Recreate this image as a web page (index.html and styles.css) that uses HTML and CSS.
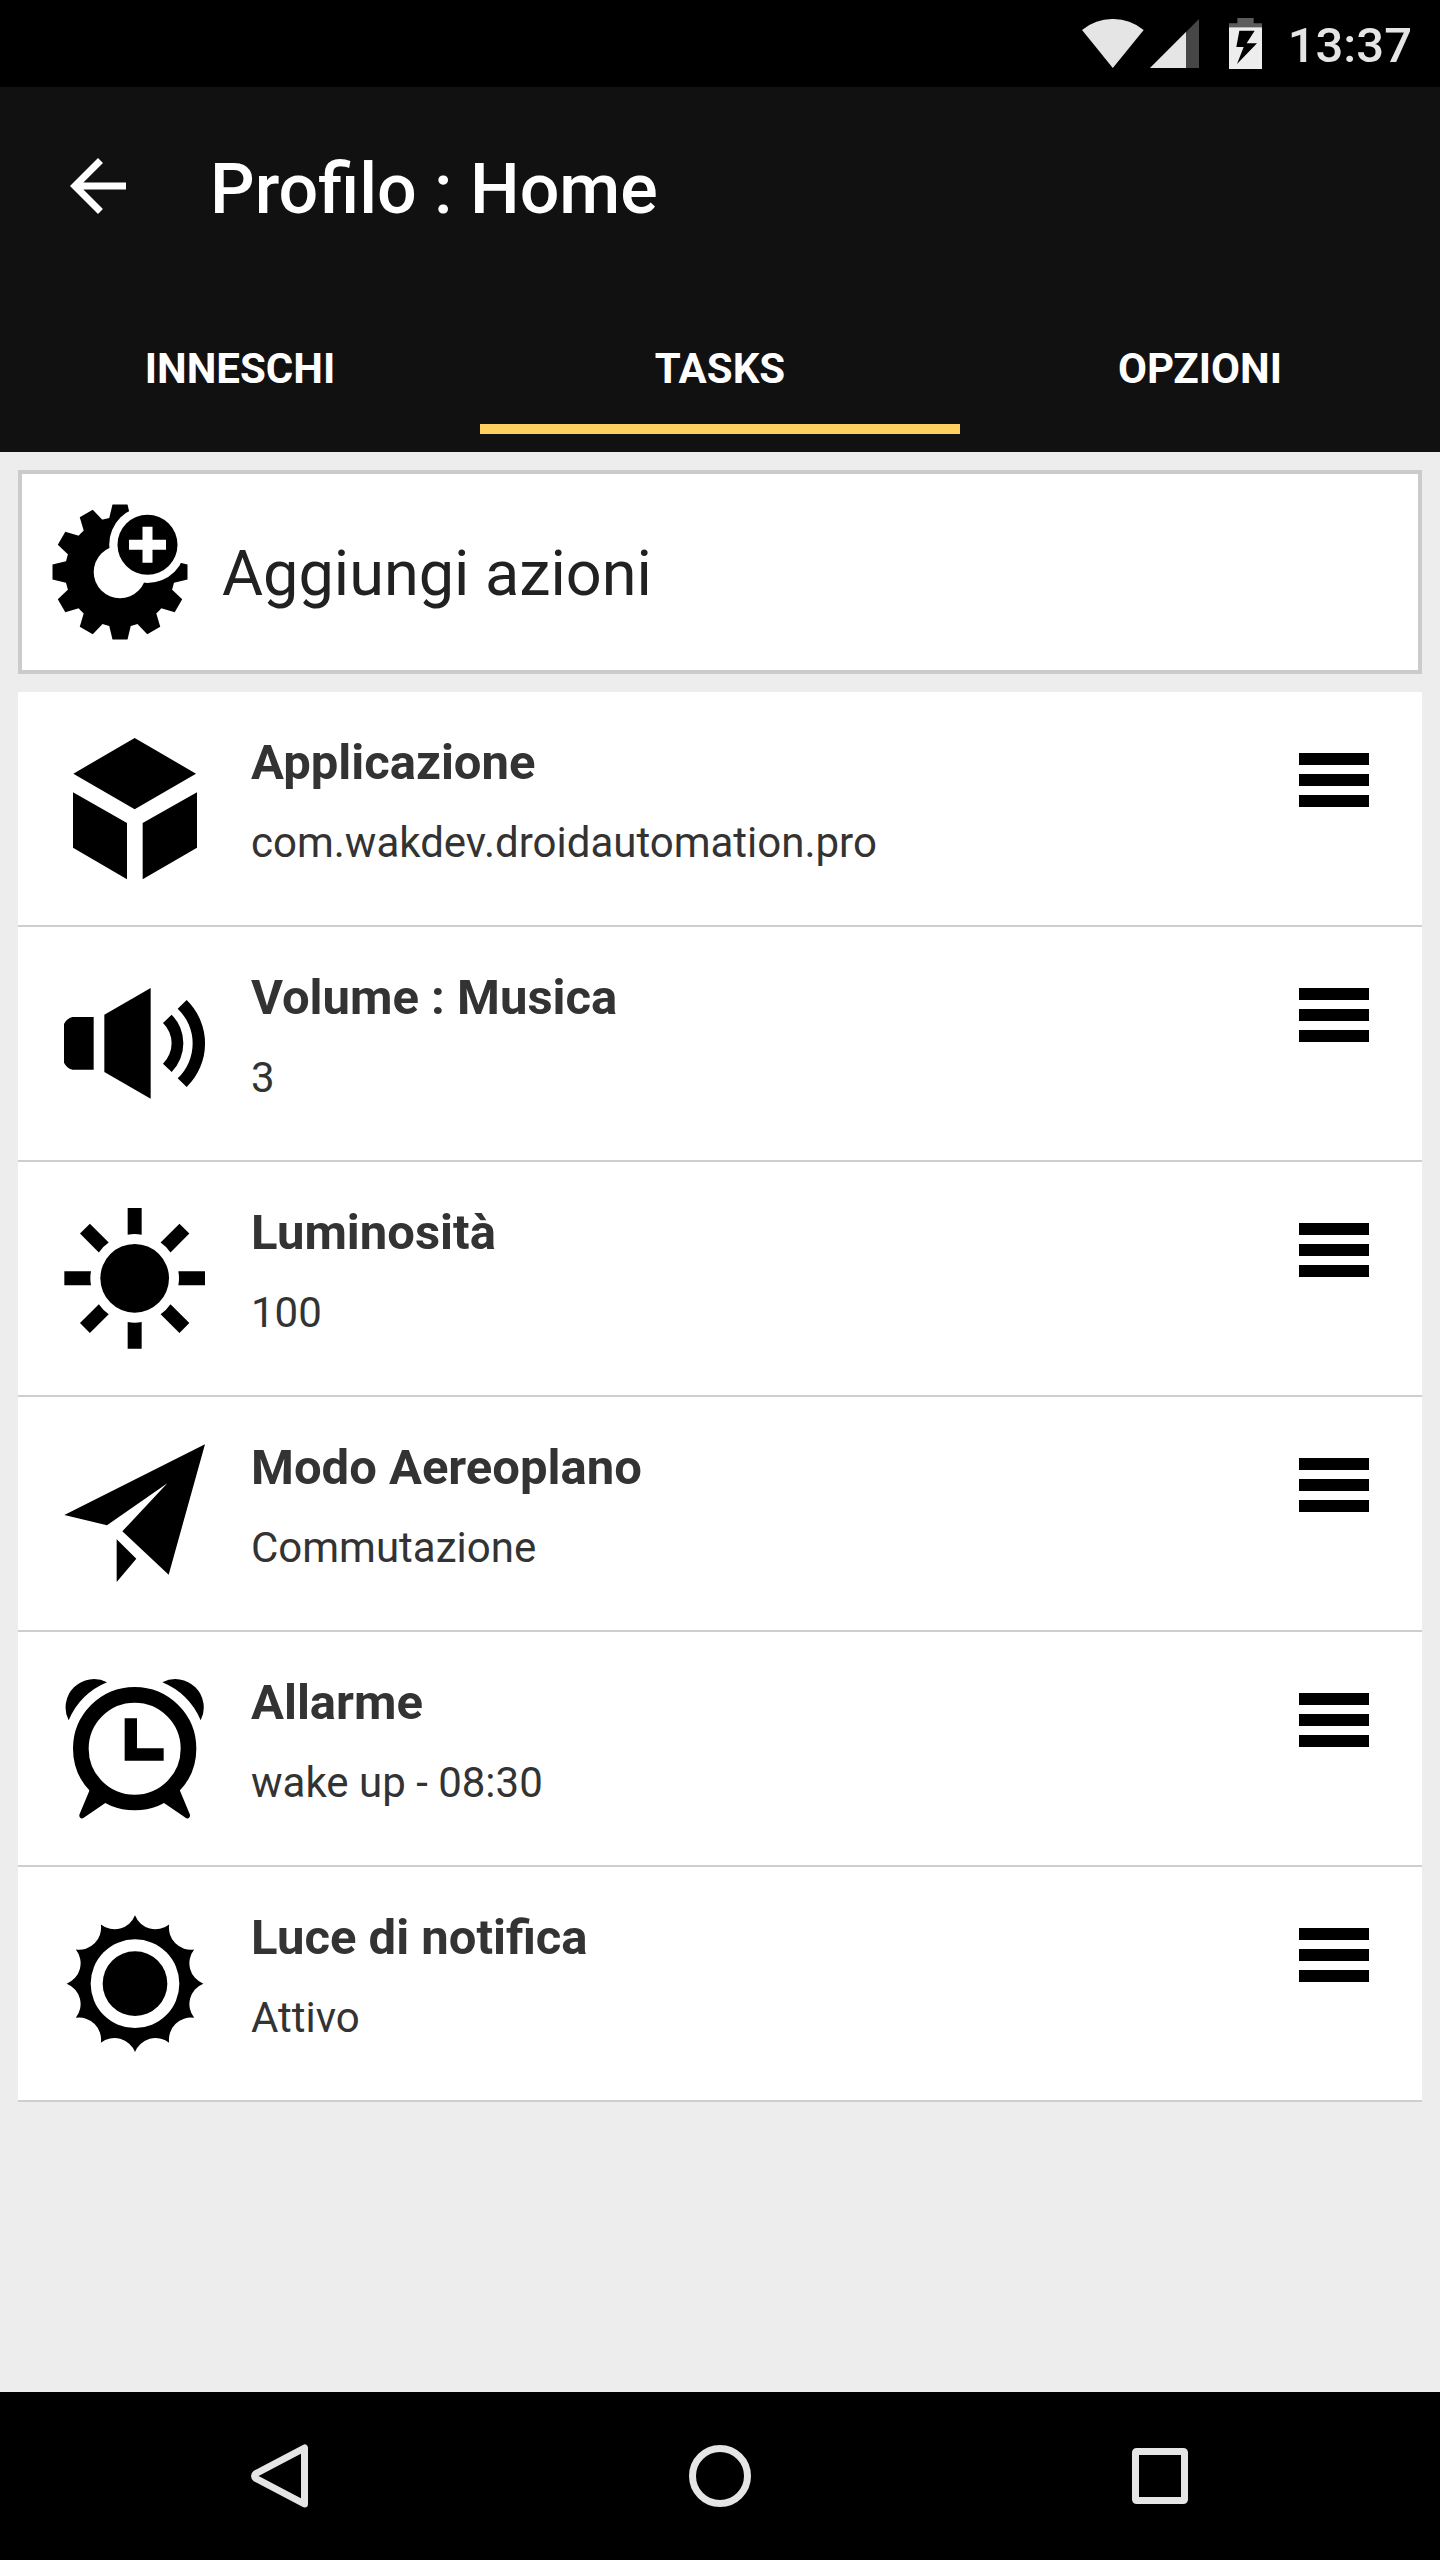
FILE: index.html
```html
<!DOCTYPE html>
<html lang="it">
<head>
<meta charset="utf-8">
<meta name="viewport" content="width=device-width, initial-scale=1">
<title>Profilo : Home</title>
<link rel="stylesheet" href="styles.css">
</head>
<body>
<div class="status-bar">
  <svg class="wifi" viewBox="66 57 186 147" aria-hidden="true"><path d="M66 90A146 146 0 0 1 251 90L158.500 204Z"/></svg>
  <svg class="signal" viewBox="270 57 147 147" aria-hidden="true"><path class="dim" d="M270 204L417 57V204Z"/><path d="M270 204L378 96V204Z"/></svg>
  <svg class="battery" viewBox="507 54 99 153" aria-hidden="true"><path class="cap" d="M532 54H581V70H606V82H507V70H532Z"/><path class="cell" d="M507 82H606V207H507Z"/><path class="bolt" d="M538 92H584L560 130H591L531 192L551 141H529Z"/></svg>
  <time class="clock">13:37</time>
</div>

<header class="app-bar">
  <div class="toolbar">
    <button class="back" type="button" aria-label="Indietro">
      <svg viewBox="4 4 16 16" aria-hidden="true"><path d="M20 11H7.830l5.590-5.590L12 4l-8 8 8 8 1.410-1.410L7.830 13H20z"/></svg>
    </button>
    <h1 class="title">Profilo : Home</h1>
  </div>
  <nav class="tabs">
    <a class="tab" href="#inneschi">INNESCHI</a>
    <a class="tab active" href="#tasks" aria-current="page">TASKS</a>
    <a class="tab" href="#opzioni">OPZIONI</a>
  </nav>
</header>

<main class="content">
  <button class="add" type="button">
    <svg class="add-icon" viewBox="-68 -68 136 136" aria-hidden="true">
      <defs><path id="tooth" d="M-7.500 -67.500H7.500L11 -53V-40H-11V-53Z"/></defs>
      <circle r="55"/>
      <use href="#tooth"/><use href="#tooth" transform="rotate(30)"/><use href="#tooth" transform="rotate(60)"/>
      <use href="#tooth" transform="rotate(90)"/><use href="#tooth" transform="rotate(120)"/><use href="#tooth" transform="rotate(150)"/>
      <use href="#tooth" transform="rotate(180)"/><use href="#tooth" transform="rotate(210)"/><use href="#tooth" transform="rotate(240)"/>
      <use href="#tooth" transform="rotate(270)"/><use href="#tooth" transform="rotate(300)"/><use href="#tooth" transform="rotate(330)"/>
      <circle class="gap" r="26.300"/>
      <circle class="gap" cx="27.500" cy="-27.300" r="38.300"/>
      <circle cx="27.500" cy="-27.300" r="30"/>
      <path class="gap" d="M22.500 -45.300h10v13h13.500v10h-13.500v13h-10v-13h-13.500v-10h13.500z"/>
    </svg>
    <span>Aggiungi azioni</span>
  </button>

  <ul class="tasks">
    <li class="task">
      <svg class="icon" viewBox="189 168 432 432" aria-hidden="true"><path d="M404 174L588 281L404 388L220 281ZM219 337L381 429V598L219 503ZM428 429L591 337V503L428 598Z"/></svg>
      <div class="text"><h2>Applicazione</h2><p>com.wakdev.droidautomation.pro</p></div>
      <button class="handle" type="button" aria-label="Sposta Applicazione"><span></span><span></span><span></span></button>
    </li>
    <li class="task">
      <svg class="icon" viewBox="189 63 432 432" aria-hidden="true"><path d="M217 201H281V359H217Q200 354 192 338V222Q200 206 217 201ZM313 194L452 114V446L313 366ZM515 194A123 123 0 0 1 515 366L489 341A85 85 0 0 0 489 219ZM560 150A182 182 0 0 1 560 411L533 385A144 144 0 0 0 533 176Z"/></svg>
      <div class="text"><h2>Volume : Musica</h2><p>3</p></div>
      <button class="handle" type="button" aria-label="Sposta Volume"><span></span><span></span><span></span></button>
    </li>
    <li class="task">
      <svg class="icon" viewBox="69 78 432 432" aria-hidden="true">
        <circle cx="284" cy="295" r="103"/>
        <path id="rays" d="M263 84H305V164Q284 160 263 164ZM263 506H305V426Q284 430 263 426ZM73 274V316H153Q149 295 153 274ZM495 274V316H415Q419 295 415 274Z"/>
        <use href="#rays" transform="rotate(45 284 295)"/>
      </svg>
      <div class="text"><h2>Luminosità</h2><p>100</p></div>
      <button class="handle" type="button" aria-label="Sposta Luminosità"><span></span><span></span><span></span></button>
    </li>
    <li class="task">
      <svg class="icon" viewBox="69 93 432 432" aria-hidden="true"><path d="M73 315L495 103L386 494L247 364L382 220L201 346ZM230 388L289 446L230 516Z"/></svg>
      <div class="text"><h2>Modo Aereoplano</h2><p>Commutazione</p></div>
      <button class="handle" type="button" aria-label="Sposta Modo Aereoplano"><span></span><span></span><span></span></button>
    </li>
    <li class="task">
      <svg class="icon" viewBox="69 78 432 432" aria-hidden="true">
        <circle class="ring" cx="284" cy="296" r="161.500"/>
        <path d="M254 205H291V295H371V332H254ZM201 97A85 85 0 0 0 86 211A215 215 0 0 1 201 97ZM367 97A85 85 0 0 1 482 211A215 215 0 0 0 367 97ZM149 420L118 494Q117 507 129 505L196 459L210 430L170 400ZM419 420L450 494Q451 507 439 505L372 459L358 430L398 400Z"/>
      </svg>
      <div class="text"><h2>Allarme</h2><p>wake up - 08:30</p></div>
      <button class="handle" type="button" aria-label="Sposta Allarme"><span></span><span></span><span></span></button>
    </li>
    <li class="task">
      <svg class="icon" viewBox="69 63 432 432" aria-hidden="true">
        <path d="M285 76A66 66 0 0 0 387.500 103.500A66 66 0 0 0 462.500 178.500A66 66 0 0 0 490 281A66 66 0 0 0 462.500 383.500A66 66 0 0 0 387.500 458.500A66 66 0 0 0 285 486A66 66 0 0 0 182.500 458.500A66 66 0 0 0 107.500 383.500A66 66 0 0 0 80 281A66 66 0 0 0 107.500 178.500A66 66 0 0 0 182.500 103.500A66 66 0 0 0 285 76Z"/>
        <circle class="gap" cx="285" cy="281" r="133"/>
        <circle cx="285" cy="281" r="97"/>
      </svg>
      <div class="text"><h2>Luce di notifica</h2><p>Attivo</p></div>
      <button class="handle" type="button" aria-label="Sposta Luce di notifica"><span></span><span></span><span></span></button>
    </li>
  </ul>
</main>

<footer class="nav-bar">
  <button type="button" aria-label="Indietro"><svg viewBox="0 0 72 72" aria-hidden="true"><path d="M60.500 8V64L12 38.500Q9 36 12 33.500Z"/></svg></button>
  <button type="button" aria-label="Home"><svg viewBox="0 0 72 72" aria-hidden="true"><circle cx="36" cy="36" r="27.500"/></svg></button>
  <button type="button" aria-label="Recenti"><svg viewBox="0 0 72 72" aria-hidden="true"><rect x="11.500" y="11.500" width="49" height="49" rx="1"/></svg></button>
</footer>
</body>
</html>
```
FILE: styles.css
```css
* {
  box-sizing: border-box;
}

body {
  margin: 0;
  min-height: 100vh;
  display: flex;
  flex-direction: column;
  background: #ededed;
  color: #333;
  font-family: Roboto, "Noto Sans", sans-serif;
}

button {
  padding: 0;
  border: 0;
  background: none;
  color: inherit;
  font: inherit;
}

h1,
h2,
p,
ul {
  margin: 0;
  padding: 0;
}

svg {
  display: block;
  flex: none;
}

/* System status bar */
.status-bar {
  display: flex;
  justify-content: flex-end;
  align-items: center;
  height: 87px;
  padding-right: 28px;
  background: #000;
  color: #e5e5e5;
  fill: #e5e5e5;
}

.wifi {
  width: 62px;
  height: 49px;
}

.signal {
  width: 49px;
  height: 49px;
  margin: 0 30px 0 6px;
}

.battery {
  width: 33px;
  height: 51px;
  margin-right: 26px;
}

.dim {
  fill: #464646;
}

.cap {
  fill: #5c5c5c;
}

.cell {
  fill: #ededed;
}

.bolt {
  fill: #000;
}

.clock {
  padding-top: 4px;
  font-size: 49px;
  font-weight: 500;
  line-height: 58px;
}

/* App bar */
.app-bar {
  padding-bottom: 18px;
  background: #111;
  color: #fff;
}

.toolbar {
  display: flex;
  align-items: center;
  gap: 84px;
  height: 197px;
  padding: 0 70px;
}

.back svg {
  width: 56px;
  height: 56px;
  fill: #fff;
}

.title {
  padding-top: 6px;
  font-size: 70px;
  font-weight: 500;
  line-height: 84px;
}

.tabs {
  display: grid;
  grid-template-columns: repeat(3, 1fr);
}

.tab {
  height: 150px;
  padding-top: 60px;
  border-bottom: 10px solid transparent;
  color: #fff;
  font-size: 42px;
  font-weight: 700;
  line-height: 50px;
  text-align: center;
  text-decoration: none;
}

.tab.active {
  border-bottom-color: #ffcf5f;
}

/* Task list */
.content {
  flex: 1;
  display: flex;
  flex-direction: column;
  gap: 18px;
  padding: 18px;
}

.add {
  display: flex;
  align-items: center;
  gap: 34px;
  height: 204px;
  padding: 0 30px;
  border: 4px solid #cbcbcb;
  background: #fff;
  color: #212121;
  font-size: 63px;
  line-height: 74px;
}

.add span {
  padding-top: 4px;
}

.add-icon {
  width: 136px;
  height: 136px;
}

.gap {
  fill: #fff;
}

.tasks {
  list-style: none;
}

.task {
  display: flex;
  align-items: flex-start;
  gap: 44px;
  height: 235px;
  padding: 42px 53px 0 45px;
  border-bottom: 2px solid #cecece;
  background: #fff;
}

.icon {
  width: 144px;
  height: 144px;
  margin-top: 2px;
}

.ring {
  fill: none;
  stroke: #000;
  stroke-width: 47px;
}

.text {
  flex: 1;
  display: flex;
  flex-direction: column;
  gap: 26px;
}

.text h2 {
  font-size: 49px;
  font-weight: 700;
  line-height: 58px;
}

.text p {
  font-size: 42px;
  line-height: 50px;
}

.handle {
  display: flex;
  flex-direction: column;
  gap: 9px;
  width: 70px;
  margin-top: 19px;
}

.handle span {
  height: 12px;
  background: #000;
}

/* System navigation bar */
.nav-bar {
  display: grid;
  grid-template-columns: repeat(3, 1fr);
  height: 168px;
  padding: 0 60px;
  background: #000;
}

.nav-bar button {
  display: flex;
  align-items: center;
  justify-content: center;
}

.nav-bar svg {
  width: 72px;
  height: 72px;
  fill: none;
  stroke: #e5e5e5;
  stroke-width: 7px;
  stroke-linejoin: round;
}
```
